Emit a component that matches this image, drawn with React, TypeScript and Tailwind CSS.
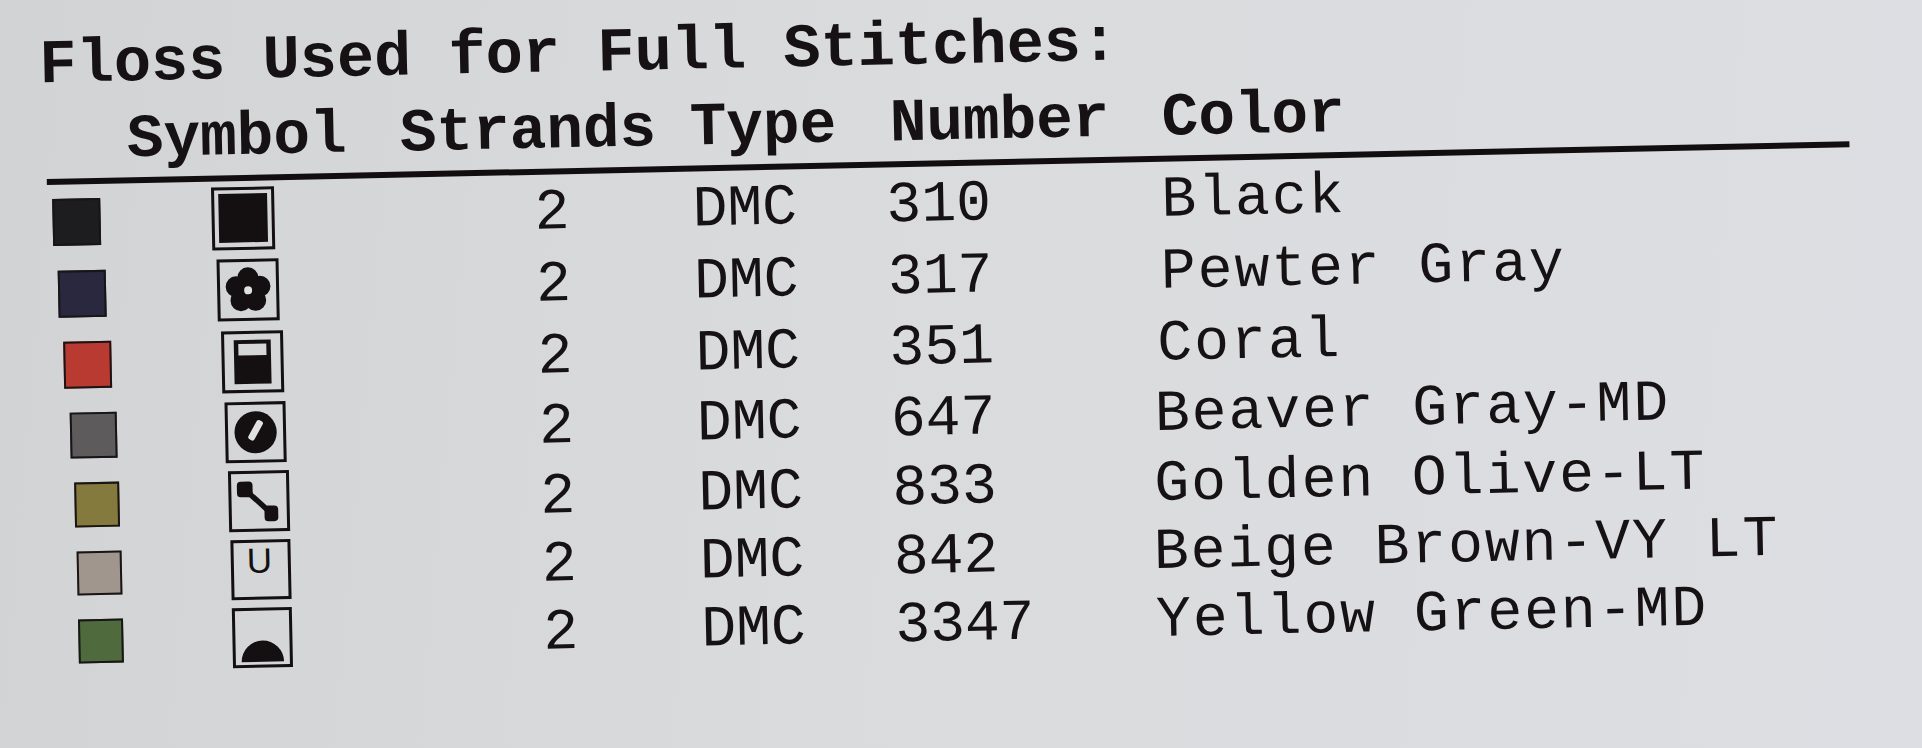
import React from "react";

const INK = "#141012";
const PAPER = "#dfe1e2";

function SymbolIcon({ kind }: { kind: number }) {
  if (kind === 5) {
    return (
      <div className="flex h-full w-full justify-center">
        <span className="pr-[3px] font-['Liberation_Sans',sans-serif] text-[35px] leading-none text-[#141012]">
          U
        </span>
      </div>
    );
  }
  return (
    <svg viewBox="0 0 56 56" className="h-full w-full" aria-hidden="true">
      {kind === 0 && <rect x="4" y="3.5" width="48" height="48" fill={INK} />}
      {kind === 1 && (
        <g fill={INK}>
          {[-90, -18, 54, 126, 198].map((a) => {
            const r = (a * Math.PI) / 180;
            return <circle key={a} cx={28 + 12.5 * Math.cos(r)} cy={28.5 + 12.5 * Math.sin(r)} r="10.5" />;
          })}
          <circle cx="28" cy="28.5" r="12" />
          <circle cx="28" cy="28.5" r="4" fill={PAPER} />
        </g>
      )}
      {kind === 2 && (
        <path fillRule="evenodd" fill={INK} d="M9.5 6 h37 v44 h-37 Z M14 10 v11.5 h28 v-11.5 Z" />
      )}
      {kind === 3 && (
        <g>
          <circle cx="28" cy="28" r="21.5" fill={INK} />
          <rect x="24.5" y="15" width="7" height="22" rx="2.5" fill={PAPER} transform="rotate(30 28 26)" />
        </g>
      )}
      {kind === 4 && (
        <g fill={INK}>
          <line x1="13.7" y1="15.7" x2="40.3" y2="40.7" stroke={INK} strokeWidth="5.5" />
          <rect x="5.7" y="7.7" width="16" height="16" rx="4" />
          <rect x="33.3" y="32.7" width="14" height="16" rx="4" />
        </g>
      )}
      {kind === 6 && <path d="M6 53 A22 22 0 0 1 50 53 Z" fill={INK} />}
    </svg>
  );
}

type Row = {
  row: string;
  c1: string;
  sq: string;
  c2: string;
  box: string;
  c5: string;
  num: string;
  name: string;
};

const rows: Row[] = [
  {
    row: "h-[72px]",
    c1: "w-[207px] pl-[48px]",
    sq: "h-[47px] w-[48px] bg-[#1d1c1e]",
    c2: "w-[323px]",
    box: "h-[63px] w-[63px]",
    c5: "w-[275px]",
    num: "310",
    name: "Black",
  },
  {
    row: "h-[72px]",
    c1: "w-[211px] pl-[52px]",
    sq: "h-[47px] w-[48px] bg-[#29283f]",
    c2: "w-[319px]",
    box: "h-[62px] w-[62px]",
    c5: "w-[273px]",
    num: "317",
    name: "Pewter Gray",
  },
  {
    row: "h-[71px]",
    c1: "w-[214px] pl-[56px]",
    sq: "h-[47px] w-[48px] bg-[#b93a31]",
    c2: "w-[316px]",
    box: "h-[62px] w-[62px]",
    c5: "w-[268px]",
    num: "351",
    name: "Coral",
  },
  {
    row: "h-[70px]",
    c1: "w-[216px] pl-[61px]",
    sq: "h-[46px] w-[47px] bg-[#5d5b5b]",
    c2: "w-[314px]",
    box: "h-[61px] w-[61px]",
    c5: "w-[264px]",
    num: "647",
    name: "Beaver Gray-MD",
  },
  {
    row: "h-[69px]",
    c1: "w-[218px] pl-[64px]",
    sq: "h-[45px] w-[45px] bg-[#857a3d]",
    c2: "w-[312px]",
    box: "h-[61px] w-[61px]",
    c5: "w-[262px]",
    num: "833",
    name: "Golden Olive-LT",
  },
  {
    row: "h-[68px]",
    c1: "w-[219px] pl-[65px]",
    sq: "h-[44px] w-[45px] bg-[#a1968e]",
    c2: "w-[311px]",
    box: "h-[60px] w-[60px]",
    c5: "w-[260px]",
    num: "842",
    name: "Beige Brown-VY LT",
  },
  {
    row: "h-[68px]",
    c1: "w-[219px] pl-[65px]",
    sq: "h-[44px] w-[45px] bg-[#4f6b3e]",
    c2: "w-[311px]",
    box: "h-[60px] w-[60px]",
    c5: "w-[261px]",
    num: "3347",
    name: "Yellow Green-MD",
  },
];

export default function App() {
  return (
    <div className="h-[748px] w-[1922px] overflow-hidden bg-[linear-gradient(95deg,#d1d3d4_0%,#d9dbdc_45%,#dcdee3_100%)]">
      <div className="origin-top-left rotate-[-1.2deg] pt-[36px] font-['Liberation_Mono',monospace] text-[#161214]">
        <div className="h-[62px] whitespace-pre pl-[38px] text-[62px] font-bold leading-none">
          Floss Used for Full Stitches:
        </div>
        <div className="mt-[14px] flex h-[61px] whitespace-pre pl-[124px] text-[61px] font-bold leading-none">
          <span className="w-[273px] shrink-0">Symbol</span>
          <span className="w-[290px] shrink-0">Strands</span>
          <span className="w-[200px] shrink-0">Type</span>
          <span className="w-[272px] shrink-0">Number</span>
          <span className="shrink-0">Color</span>
        </div>
        <div className="ml-[43px] mt-[7px] h-[6px] w-[1803px] bg-[#120e10]" />
        <div className="mt-[1px] flex flex-col">
          {rows.map((r, i) => (
            <div key={r.num} className={`flex items-center whitespace-pre text-[58px] leading-none ${r.row}`}>
              <div className={`shrink-0 ${r.c1}`}>
                <div className={`border-2 border-[#191516] ${r.sq}`} />
              </div>
              <div className={`shrink-0 ${r.c2}`}>
                <div className={`border-[3px] border-[#141012] ${r.box}`}>
                  <SymbolIcon kind={i} />
                </div>
              </div>
              <div className="w-[158px] shrink-0 pt-[4px]">2</div>
              <div className="w-[194px] shrink-0 pt-[4px]">DMC</div>
              <div className={`shrink-0 pt-[3px] ${r.c5}`}>{r.num}</div>
              <div className="shrink-0 pt-[4px] tracking-[2px]">{r.name}</div>
            </div>
          ))}
        </div>
      </div>
    </div>
  );
}
